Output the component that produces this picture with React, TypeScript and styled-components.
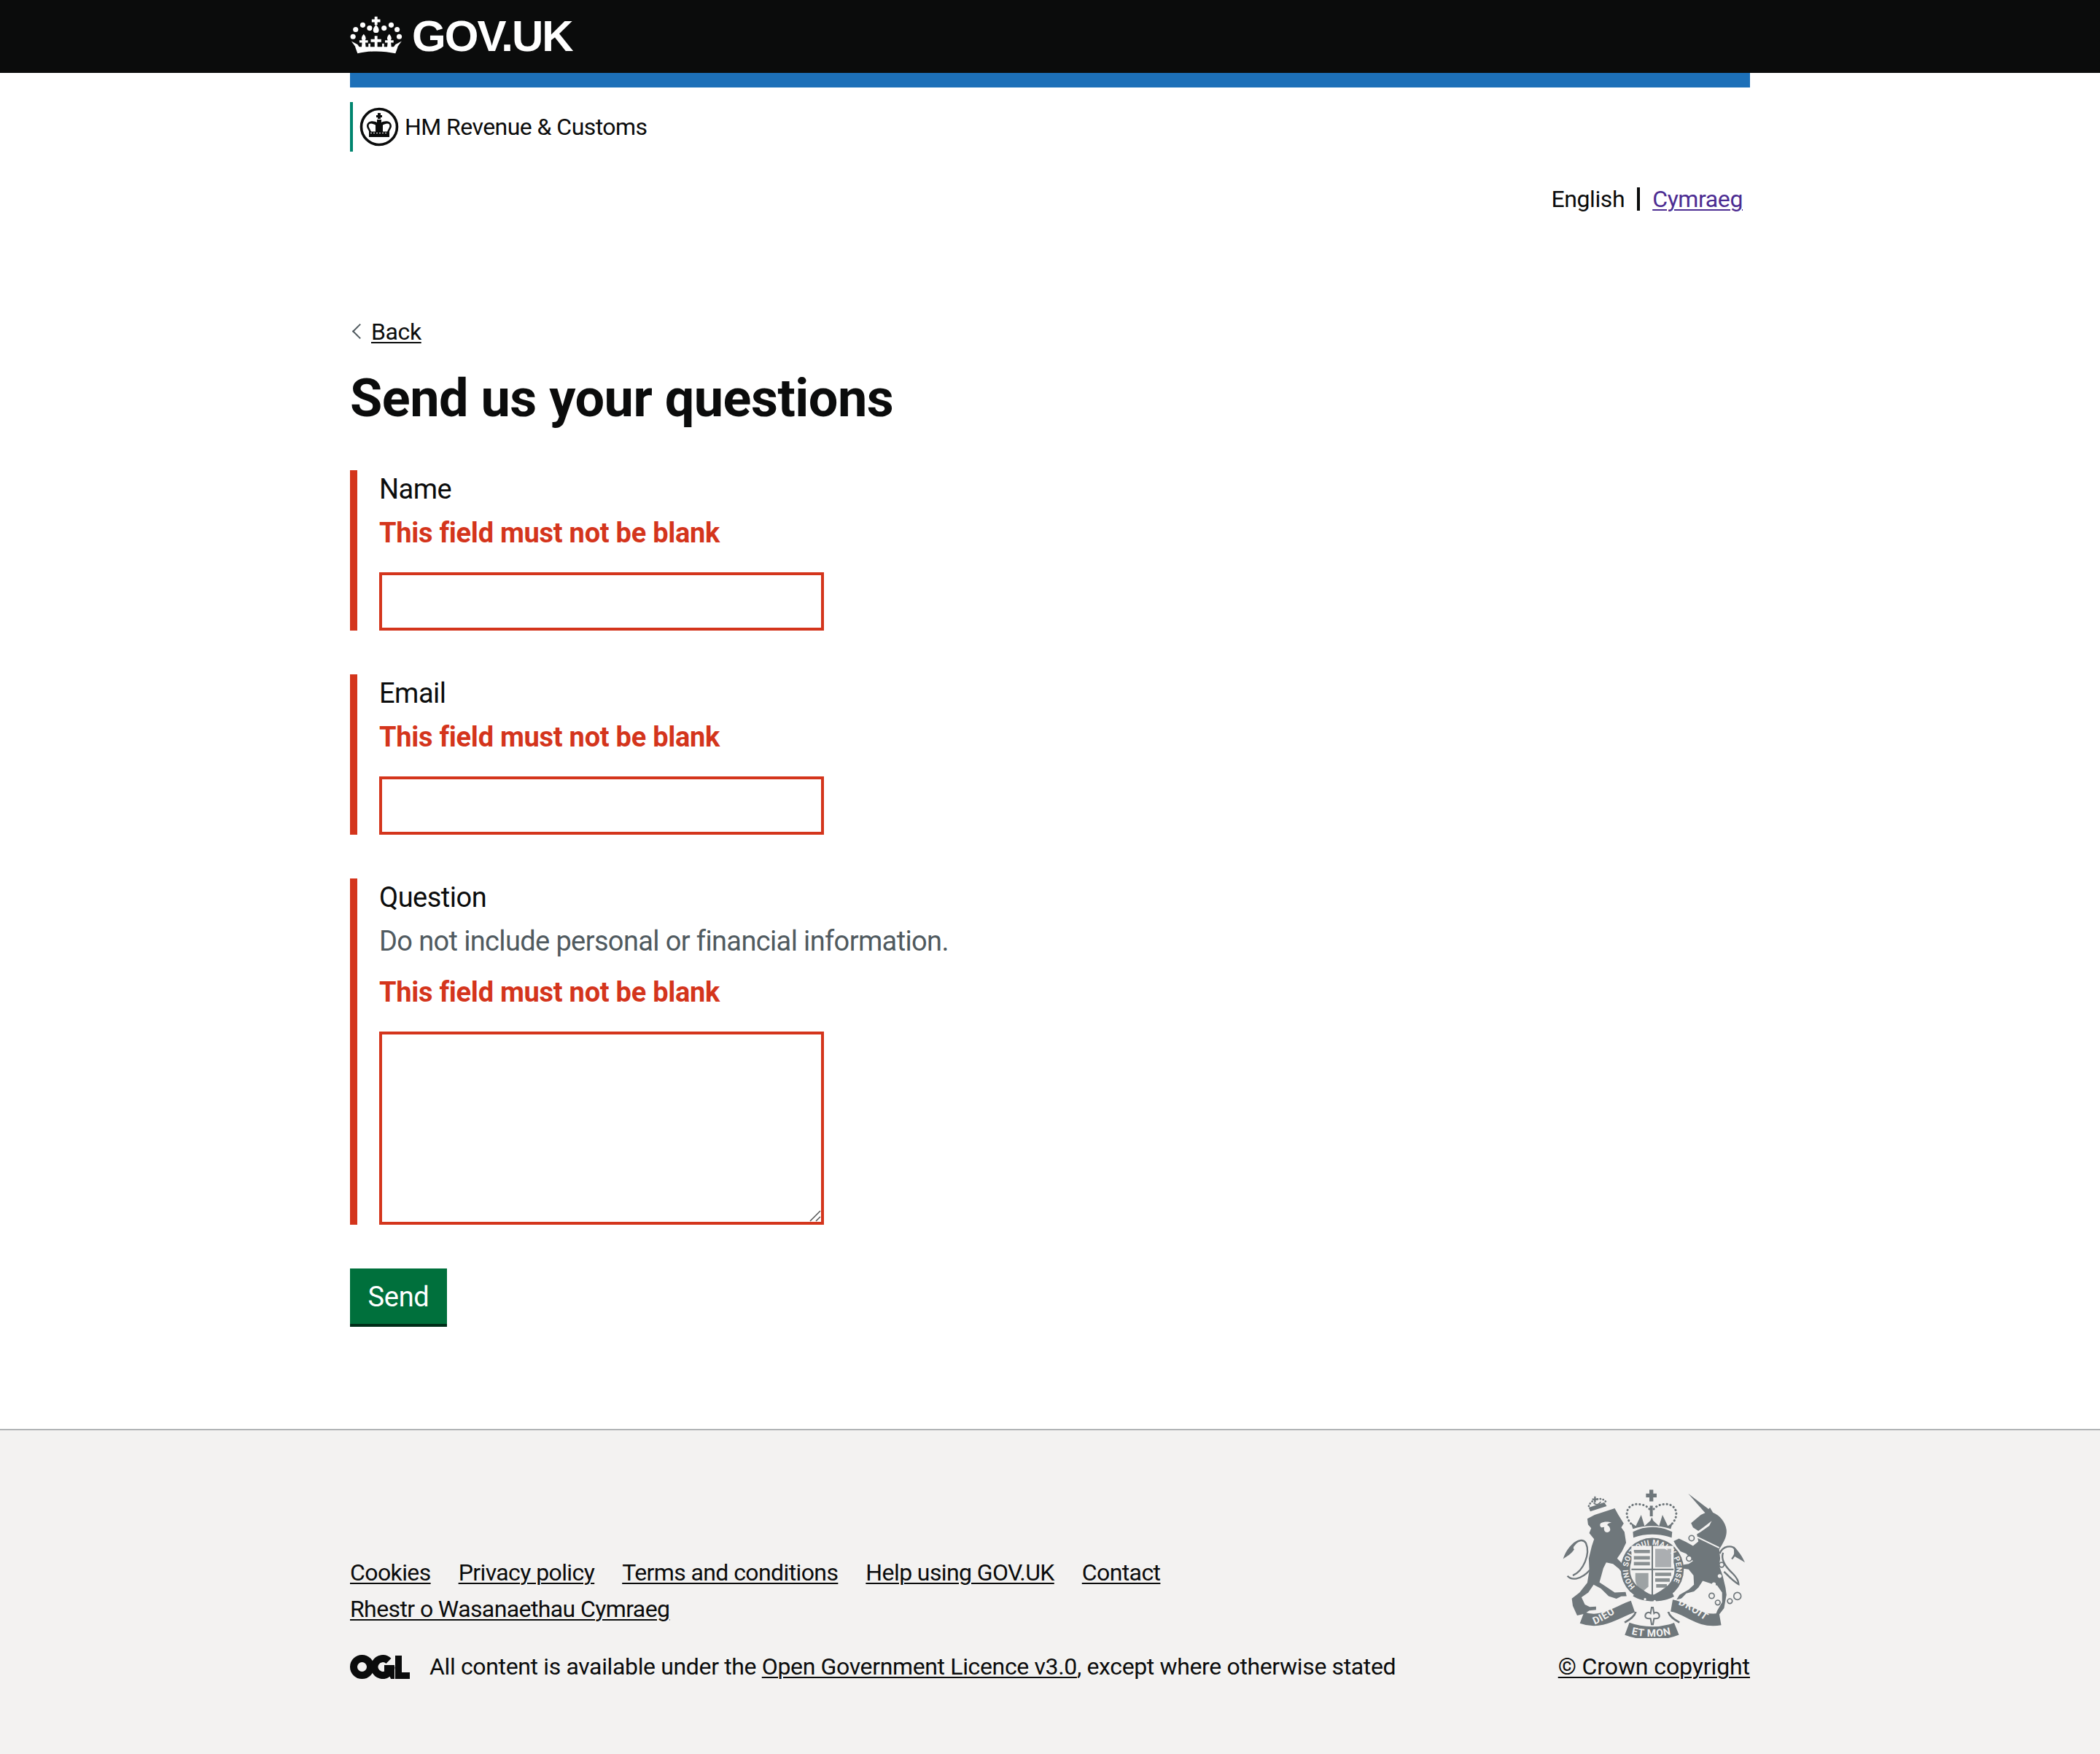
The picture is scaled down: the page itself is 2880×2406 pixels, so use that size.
import styled, { createGlobalStyle } from "styled-components";

const GlobalStyle = createGlobalStyle`
  body {
    margin: 0;
    background: #fff;
    color: #0b0c0c;
    font-family: Roboto, "Noto Sans", sans-serif;
  }
`;

const fields = [
  { label: "Name" },
  { label: "Email" },
  { label: "Question", hint: "Do not include personal or financial information.", long: true },
];

const footerLinks = [
  "Cookies",
  "Privacy policy",
  "Terms and conditions",
  "Help using GOV.UK",
  "Contact",
  "Rhestr o Wasanaethau Cymraeg",
];

function GovCrown() {
  return (
    <svg viewBox="120 62 218 160" width="72" height="52" fill="#fff" aria-hidden="true">
      <path d="M222 64h12v12h12v12h-12v12h-12V88h-12V76h12z" />
      <path d="M228 98c9 11 12 17 12 23a12 12 0 0 1-24 0c0-6 3-12 12-23z" />
      <circle cx="172" cy="100" r="11" />
      <circle cx="201" cy="113" r="11" />
      <circle cx="262" cy="113" r="11" />
      <circle cx="292" cy="100" r="11" />
      <circle cx="142" cy="119" r="11" />
      <circle cx="317" cy="119" r="11" />
      <circle cx="131" cy="149" r="11" />
      <circle cx="326" cy="149" r="11" />
      <path d="M150 220c50-12 110-12 160 0l10-28H140z" />
      <path d="M222 146h12v14h16v12h-16v24h-12v-24h-16v-12h16z" />
      <path d="M176 138c7 8 9 13 9 20l-3 6h12v10h-11l2 22h-18l2-22h-11v-10h12l-3-6c0-7 2-12 9-20z" />
      <path d="M284 138c7 8 9 13 9 20l-3 6h12v10h-11l2 22h-18l2-22h-11v-10h12l-3-6c0-7 2-12 9-20z" />
      <path d="M124 168l26 14 10 14h-16zM336 168l-26 14-10 14h16z" />
      <path d="M196 178h8v18h-8zM254 178h8v18h-8z" />
    </svg>
  );
}

function HmrcCrest() {
  return (
    <svg viewBox="0 0 54 54" width="54" height="54" aria-hidden="true">
      <circle cx="27" cy="27" r="24.500" fill="#fff" stroke="#0b0c0c" strokeWidth="3.600" />
      <path d="M25 8h4v3h2v3h-2v2h-4v-2h-2v-3h2z" fill="#0b0c0c" />
      <path d="M24 17h6v4c4-3 14-3 14 5 0 2-2 5-3 7v5H13v-5c-1-2-3-5-3-7 0-8 10-8 14-5z" fill="#0b0c0c" />
      <path d="M16 22.500c-3 0-4 2-3 5l3 6h6v-9c-2-1-4-2-6-2zM38 22.500c3 0 4 2 3 5l-3 6h-6v-9c2-1 4-2 6-2z" fill="#fff" />
      <path d="M13 34h28v7H13z" fill="#0b0c0c" />
      <path d="M15 35.500h24" stroke="#fff" strokeWidth="1.200" strokeDasharray="2 2" />
    </svg>
  );
}

function OglLogo() {
  return (
    <svg viewBox="0 0 82 33" width="82" height="33" fill="#0b0c0c" aria-hidden="true">
      <circle cx="16.500" cy="16.500" r="11.500" fill="none" stroke="#0b0c0c" strokeWidth="10" />
      <path d="M53 8.300A11.500 11.500 0 1 0 56.500 16.500" fill="none" stroke="#0b0c0c" strokeWidth="10" />
      <path d="M47 14h14v19h-5l-2-5-7-1z" />
      <path d="M62 1h9v23h11v9H62z" />
    </svg>
  );
}

function RoyalArms() {
  const grey = "#6f777b";
  const bg = "#f3f2f1";
  return (
    <svg viewBox="130 62 752 616" width="250" height="205" aria-hidden="true">
      <defs>
        <path id="garter" d="M430 466A100 100 0 1 1 570 466" />
        <path id="ribbonLeft" d="M262 622C300 608 340 578 376 558" />
        <path id="ribbonMid" d="M412 662C460 676 540 676 586 660" />
        <path id="ribbonRight" d="M606 540C650 556 696 592 736 618" />
      </defs>

      {/* lion */}
      <path
        fill={grey}
        d="M232 186L262 170L345 143L360 170L382 205L372 222L385 240L392 285L375 320L355 350L395 390L412 420L395 430L378 412L362 392L338 372L310 366L298 390L290 420L282 448L315 470L345 490L390 488L394 505L372 506L352 516L320 505L288 474L258 458L236 490L208 510L222 540L242 550L268 548L268 562L240 565L220 578L190 585L172 545L168 515L200 490L232 450L240 400L238 350L250 300L260 270L240 245L248 225L235 210Z"
      />
      <path d="M288 204c-6 6-4 14 2 18l12-2c-2 6-2 14 4 20 8 4 16 2 20-6 2-10-4-18-12-22 2-8 10-10 18-10-12-4-30-6-44 2z" fill={bg} />
      <g fill="none" stroke={grey} strokeWidth="7">
        <path d="M242 398C205 440 165 440 150 422" />
        <path d="M172 420C215 402 246 332 226 286C214 268 190 274 176 296" />
      </g>
      <path d="M196 274C170 282 142 318 132 352C148 340 166 332 178 312C168 306 184 290 196 274z" fill={grey} />
      <path d="M244 156l-6-16 64-22 10 16z" fill={grey} />
      <path d="M238 134C244 108 296 88 312 122" fill="none" stroke={grey} strokeWidth="8" strokeDasharray="1 11" strokeLinecap="round" />
      <path d="M258 120C268 132 278 128 288 116" fill="none" stroke={grey} strokeWidth="5" />
      <path d="M260 94h7v8h8v7h-8v10h-7v-10h-8v-7h8z" fill={grey} />

      {/* unicorn */}
      <path
        fill={grey}
        d="M648 82L732 146L738 140L750 160C778 172 802 198 806 232C808 256 798 276 786 296L776 312L780 350L776 380L790 420L802 470L806 500L796 555L778 578L760 586L768 565L788 530L788 490L768 462L738 452L708 442L690 470L672 486L640 494L620 515L600 520L612 500L650 478L672 458L670 420L650 395L628 392L612 378L650 372L668 360L640 330L616 320L600 300L588 278L610 268L640 282L668 298L690 280L684 250L700 240L735 215L745 195L710 222L690 236L668 222L660 204L700 170L718 162Z"
      />
      <path d="M686 262l90 44" fill="none" stroke={bg} strokeWidth="6" />
      <g fill="none" stroke={grey} strokeWidth="7">
        <path d="M778 330C790 298 828 292 842 312C850 326 830 350 828 352" />
        <path d="M792 326C782 352 800 382 830 410C846 426 856 442 856 456C836 446 812 420 796 404" />
      </g>
      <path d="M836 300C856 318 872 344 882 366C866 356 850 348 838 340z" fill={grey} />
      <g fill={bg}>
        <circle cx="754" cy="456" r="8" />
        <circle cx="778" cy="422" r="8" />
      </g>
      <g fill={bg} stroke={grey} strokeWidth="5">
        <circle cx="786" cy="376" r="10" />
        <circle cx="662" cy="266" r="11" />
        <circle cx="652" cy="350" r="11" />
        <circle cx="745" cy="504" r="11" />
        <circle cx="770" cy="532" r="10" />
        <circle cx="820" cy="526" r="10" />
        <circle cx="851" cy="505" r="15" />
      </g>

      {/* crown */}
      <g fill={grey}>
        <path d="M488 66h16v16h14v16h-14v16h-16V98h-14V82h14z" />
        <rect x="490" y="132" width="12" height="44" />
        <path d="M420 240c50-26 110-26 162 0l-2 24c-50-18-110-18-158 0z" />
        <path d="M420 228l-8-26 20 14 22-46 14 46 24-22 6-14 6 14 24 22 14-46 22 46 20-14-8 26c-44-16-112-16-156 0z" />
      </g>
      <g fill="none" stroke={grey} strokeWidth="9" strokeDasharray="1 14" strokeLinecap="round">
        <path d="M412 206c-30-34-18-76 20-80 24-2 50 6 60 26" />
        <path d="M582 206c30-34 18-76-20-80-24-2-50 6-60 26" />
      </g>

      {/* garter and shield */}
      <circle cx="500" cy="395" r="130" fill={grey} />
      <circle cx="500" cy="395" r="92" fill={bg} />
      <path d="M414 298h174v100c0 46-42 84-88 104-46-20-86-58-86-104z" fill={bg} />
      <path d="M497 296h6v206h-6zM414 392h174v6H414z" fill={grey} />
      <g fill={grey}>
        <path d="M424 314h66v14h-66zM424 340h66v14h-66zM424 364h66v14h-66z" opacity="0.8" />
        <path d="M512 310h66v76h-66z" opacity="0.55" />
        <path d="M512 408h66v14h-66zM512 432h60v14h-60zM516 456h44v14h-44z" opacity="0.8" />
        <path d="M430 410h54v56l-26 22c-16-14-28-34-28-52z" opacity="0.65" />
      </g>
      <text fill={bg} fontFamily="Roboto, sans-serif" fontWeight="700" fontSize="31">
        <textPath href="#garter" textLength="445" lengthAdjust="spacing">HONI SOIT QUI MAL Y PENSE</textPath>
      </text>
      <path d="M420 505c40 26 120 30 170 2l-10-22c-44 22-96 20-140-6z" fill={grey} />
      <circle cx="470" cy="518" r="5" fill={bg} />
      <circle cx="510" cy="526" r="5" fill={bg} />

      {/* motto */}
      <g fill="none" stroke={grey}>
        <path d="M210 594C290 624 350 572 420 548" strokeWidth="50" />
        <path d="M396 640C460 664 540 664 600 640" strokeWidth="54" />
        <path d="M580 544C650 556 690 616 780 600" strokeWidth="50" />
      </g>
      <path d="M432 570c-6 22-30 34-46 44M566 570c6 22 30 34 46 44" fill="none" stroke={grey} strokeWidth="8" />
      <g fill={bg} fontFamily="Roboto, sans-serif" fontWeight="700" fontSize="42" letterSpacing="2">
        <text><textPath href="#ribbonLeft">DIEU</textPath></text>
        <text><textPath href="#ribbonMid" startOffset="2">ET MON</textPath></text>
        <text><textPath href="#ribbonRight">DROIT</textPath></text>
      </g>
      <path d="M497 552h6l4 24c8-8 24-2 22 14-4 10-14 8-22 8l-4 24h-6l-4-24c-8 0-18 2-22-8-2-16 14-22 22-14z" fill={bg} stroke={grey} strokeWidth="6" />
    </svg>
  );
}

export default function App() {
  return (
    <>
      <GlobalStyle />
      <TopBar>
        <TopBarInner>
          <GovCrown />
          <GovWordmark>GOV.UK</GovWordmark>
        </TopBarInner>
      </TopBar>
      <Wrapper>
        <BlueBar />
        <ServiceName>
          <HmrcCrest />
          HM Revenue &amp; Customs
        </ServiceName>
        <LanguageToggle>
          <span>English</span>
          <LanguageDivider />
          <VisitedLink href="#">Cymraeg</VisitedLink>
        </LanguageToggle>
        <BackRow>
          <BackChevron />
          <TextLink href="#">Back</TextLink>
        </BackRow>
        <Heading>Send us your questions</Heading>
        <form onSubmit={(e) => e.preventDefault()}>
          {fields.map((f) => (
            <ErrorGroup key={f.label}>
              <Label>{f.label}</Label>
              {f.hint && <Hint>{f.hint}</Hint>}
              <ErrorMsg>This field must not be blank</ErrorMsg>
              {f.long ? (
                <TextAreaBox>
                  <TextArea />
                  <ResizeGrip viewBox="0 0 16 16">
                    <path d="M1 15L15 1M9 15l6-6" />
                  </ResizeGrip>
                </TextAreaBox>
              ) : (
                <TextInput type="text" />
              )}
            </ErrorGroup>
          ))}
          <SendButton type="submit">Send</SendButton>
        </form>
      </Wrapper>
      <Footer>
        <FooterInner>
          <FooterLeft>
            <FooterLinks>
              {footerLinks.map((l) => (
                <TextLink href="#" key={l}>
                  {l}
                </TextLink>
              ))}
            </FooterLinks>
            <Licence>
              <OglLogo />
              <span>
                All content is available under the <TextLink href="#">Open Government Licence v3.0</TextLink>, except
                where otherwise stated
              </span>
            </Licence>
          </FooterLeft>
          <FooterRight>
            <ArmsBox>
              <RoyalArms />
            </ArmsBox>
            <TextLink href="#">© Crown copyright</TextLink>
          </FooterRight>
        </FooterInner>
      </Footer>
    </>
  );
}

const TopBar = styled.header`
  background: #0b0c0c;
  height: 100px;
`;
const TopBarInner = styled.div`
  width: 1920px;
  margin: 0 auto;
  height: 100%;
  display: flex;
  align-items: center;
  gap: 13px;
  svg {
    margin-top: -4px;
  }
`;
const GovWordmark = styled.span`
  color: #fff;
  font-family: "Liberation Sans", Arial, sans-serif;
  font-weight: 700;
  font-size: 60px;
  letter-spacing: -1.9px;
  line-height: 100px;
`;
const Wrapper = styled.main`
  width: 1920px;
  margin: 0 auto;
  padding-bottom: 140px;
`;
const BlueBar = styled.div`
  height: 20px;
  background: #1d70b8;
`;
const ServiceName = styled.div`
  margin-top: 20px;
  height: 68px;
  border-left: 4px solid #00856f;
  padding-left: 9px;
  display: flex;
  align-items: center;
  gap: 8px;
  font-size: 32px;
  letter-spacing: -0.55px;
`;
const LanguageToggle = styled.div`
  margin-top: 40px;
  padding-right: 10px;
  display: flex;
  justify-content: flex-end;
  align-items: center;
  height: 50px;
  font-size: 32px;
  letter-spacing: -0.4px;
`;
const LanguageDivider = styled.i`
  width: 4px;
  height: 32px;
  background: #0b0c0c;
  margin: 0 17px;
`;
const TextLink = styled.a`
  color: #0b0c0c;
  text-decoration: underline;
  text-decoration-thickness: 2px;
  text-underline-offset: 0.1em;
`;
const VisitedLink = styled(TextLink)`
  color: #4c2c92;
`;
const BackRow = styled.div`
  margin-top: 134px;
  height: 45px;
  display: flex;
  align-items: center;
  font-size: 32px;
  letter-spacing: -0.4px;
`;
const BackChevron = styled.i`
  width: 13px;
  height: 13px;
  margin: 0 8px 0 6px;
  border-left: 2px solid #505a5f;
  border-bottom: 2px solid #505a5f;
  transform: rotate(45deg);
`;
const Heading = styled.h1`
  margin: 30px 0 58px;
  font-size: 72px;
  line-height: 80px;
  font-weight: 700;
  letter-spacing: -0.5px;
`;
const ErrorGroup = styled.div`
  border-left: 10px solid #d4351c;
  padding-left: 30px;
  margin-bottom: 60px;
  display: flex;
  flex-direction: column;
  align-items: flex-start;
`;
const Label = styled.label`
  font-size: 38px;
  line-height: 52px;
  margin-bottom: 8px;
  letter-spacing: -0.5px;
`;
const Hint = styled.div`
  font-size: 38px;
  line-height: 52px;
  color: #505a5f;
  margin-bottom: 18px;
  letter-spacing: -0.63px;
`;
const ErrorMsg = styled.p`
  margin: 0 0 28px;
  font-size: 38px;
  line-height: 52px;
  font-weight: 700;
  color: #d4351c;
  letter-spacing: -0.27px;
`;
const TextInput = styled.input`
  box-sizing: border-box;
  display: block;
  width: 610px;
  height: 80px;
  border: 4px solid #d4351c;
  border-radius: 0;
  outline: 0;
  background: #fff;
`;
const TextAreaBox = styled.div`
  position: relative;
  width: 610px;
  height: 265px;
`;
const TextArea = styled.textarea`
  box-sizing: border-box;
  display: block;
  width: 100%;
  height: 100%;
  border: 4px solid #d4351c;
  border-radius: 0;
  outline: 0;
  background: #fff;
  resize: none;
`;
const ResizeGrip = styled.svg`
  position: absolute;
  right: 4px;
  bottom: 4px;
  width: 16px;
  height: 16px;
  fill: none;
  stroke: #555;
  stroke-width: 1.5;
  pointer-events: none;
`;
const SendButton = styled.button`
  display: block;
  height: 80px;
  width: 133px;
  padding: 2px 0 0;
  border: 0;
  border-bottom: 4px solid #002d18;
  border-radius: 0;
  background: #00703c;
  color: #fff;
  font: 400 38px/1 Roboto, sans-serif;
  letter-spacing: -0.3px;
`;
const Footer = styled.footer`
  background: #f3f2f1;
  border-top: 2px solid #b1b4b6;
`;
const FooterInner = styled.div`
  width: 1920px;
  margin: 0 auto;
  padding: 80px 0 95px;
  display: flex;
  justify-content: space-between;
  align-items: flex-end;
  font-size: 32px;
  line-height: 50px;
  letter-spacing: -0.36px;
`;
const FooterLeft = styled.div``;
const FooterLinks = styled.div`
  display: flex;
  flex-wrap: wrap;
  column-gap: 38px;
  max-width: 1200px;
  letter-spacing: -0.6px;
`;
const Licence = styled.div`
  margin-top: 29px;
  display: flex;
  align-items: center;
  gap: 27px;
`;
const FooterRight = styled.div`
  display: flex;
  flex-direction: column;
  align-items: flex-end;
  letter-spacing: -0.1px;
`;
const ArmsBox = styled.div`
  line-height: 0;
  margin: 0 7px 14px 0;
`;
